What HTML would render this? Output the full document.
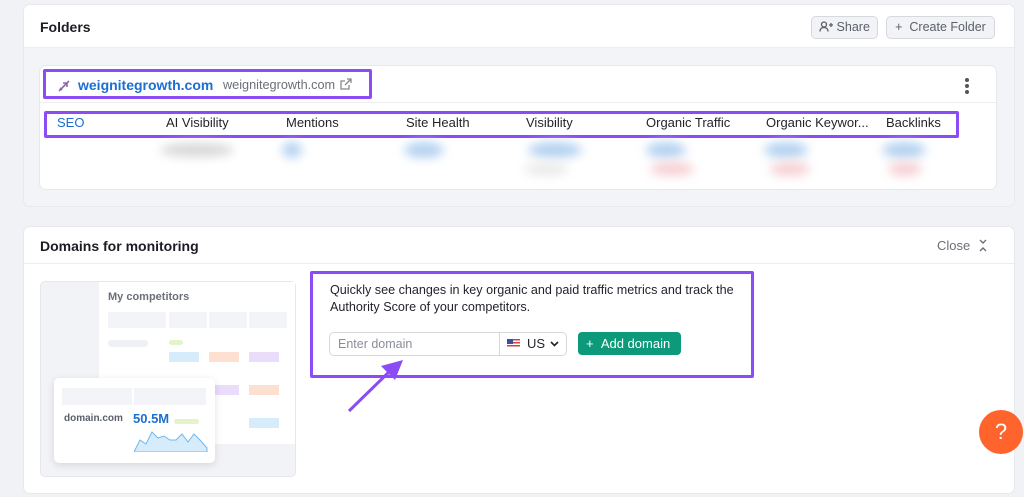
<!DOCTYPE html><html><head><style>
*{box-sizing:border-box;margin:0;padding:0}
body{width:1024px;height:497px;background:#f1f2f6;font-family:"Liberation Sans",sans-serif;position:relative;overflow:hidden;color:#212121}
.abs{position:absolute;white-space:nowrap}
.panel{position:absolute;left:24px;width:990px;background:#fff;border-radius:6px;box-shadow:0 0 0 1px #e8e9ee}
.btn{position:absolute;top:11px;height:23px;border:1px solid #d6d8de;border-radius:5px;background:#f2f3f6;font-size:12.5px;color:#5b5f6a;line-height:21px;white-space:nowrap;text-align:center}
.hdr{position:absolute;top:115px;font-size:13px;color:#1f2229;white-space:nowrap}
.blob{position:absolute;border-radius:50%;filter:blur(5px)}
.purple{border:3px solid #8b4cf6;position:absolute;border-radius:2px}
</style></head><body>
<div class="panel" style="top:5px;height:201px;background:#f3f4f8;overflow:hidden">
  <div class="abs" style="left:0;top:0;width:990px;height:43px;background:#fff;border-bottom:1px solid #eceef2"></div>
  <div class="abs" style="left:16px;top:14px;font-size:14px;font-weight:bold;color:#1b1d23">Folders</div>
  <div class="btn" style="left:787px;width:67px"><svg width="14" height="11" viewBox="0 0 14 11" style="vertical-align:-1px"><circle cx="5" cy="3.5" r="2.5" fill="none" stroke="#5b5f6a" stroke-width="1.3"/><path d="M1 10.5c0-3 2-4 4-4s4 1 4 4M10 4h4M12 2v4" stroke="#5b5f6a" stroke-width="1.3" fill="none"/></svg> Share</div>
  <div class="btn" style="left:862px;width:109px">+&nbsp;&nbsp;Create Folder</div>
  <div class="abs" style="left:16px;top:61px;width:956px;height:123px;background:#fff;border-radius:6px;box-shadow:0 0 0 1px #e6e8ec">
    <div class="abs" style="left:0;top:36px;width:956px;height:1px;background:#eceef2"></div>
    <div class="abs" style="left:925px;top:12px;width:4px"><div style="width:4px;height:4px;border-radius:2px;background:#555;margin-bottom:2px"></div><div style="width:4px;height:4px;border-radius:2px;background:#555;margin-bottom:2px"></div><div style="width:4px;height:4px;border-radius:2px;background:#555"></div></div>
  </div>
</div>
<svg class="abs" style="left:57px;top:79px" width="14" height="14" viewBox="0 0 14 14"><path d="M2 12 L12 2 M6 4 L10 4 L10 8 M3 9 l2 2" stroke="#8b6aa8" stroke-width="1.6" fill="none"/></svg>
<div class="abs" style="left:78px;top:77px;font-size:14px;font-weight:bold;color:#1a6fd1">weignitegrowth.com</div>
<div class="abs" style="left:223px;top:78px;font-size:12.7px;color:#6b6f78">weignitegrowth.com</div>
<svg class="abs" style="left:340px;top:78px" width="12" height="12" viewBox="0 0 12 12"><path d="M9 7v4H1V3h4M7 1h4v4M11 1L5 7" stroke="#888" stroke-width="1.3" fill="none"/></svg>
<div class="purple" style="left:43px;top:69px;width:329px;height:30px"></div>
<div class="hdr" style="left:57px;color:#1a6fd1">SEO</div>
<div class="hdr" style="left:166px">AI Visibility</div>
<div class="hdr" style="left:286px">Mentions</div>
<div class="hdr" style="left:406px">Site Health</div>
<div class="hdr" style="left:526px">Visibility</div>
<div class="hdr" style="left:646px">Organic Traffic</div>
<div class="hdr" style="left:766px">Organic Keywor...</div>
<div class="hdr" style="left:886px">Backlinks</div>
<div class="purple" style="left:44px;top:111px;width:915px;height:27px"></div>
<div class="blob" style="left:160px;top:143px;width:74px;height:14px;background:#d8d8d8"></div>
<div class="blob" style="left:282px;top:142px;width:20px;height:16px;background:#b4d2f0"></div>
<div class="blob" style="left:404px;top:142px;width:40px;height:16px;background:#b4d2f0"></div>
<div class="blob" style="left:528px;top:142px;width:54px;height:16px;background:#b4d2f0"></div>
<div class="blob" style="left:524px;top:162px;width:44px;height:14px;background:#ebebeb"></div>
<div class="blob" style="left:646px;top:142px;width:40px;height:16px;background:#b4d2f0"></div>
<div class="blob" style="left:650px;top:162px;width:44px;height:14px;background:#f6d0d4"></div>
<div class="blob" style="left:764px;top:142px;width:44px;height:16px;background:#b4d2f0"></div>
<div class="blob" style="left:770px;top:162px;width:40px;height:14px;background:#f6d0d4"></div>
<div class="blob" style="left:882px;top:142px;width:44px;height:16px;background:#b4d2f0"></div>
<div class="blob" style="left:888px;top:162px;width:34px;height:14px;background:#f6d0d4"></div>

<div class="panel" style="top:227px;height:266px">
  <div class="abs" style="left:0;top:36px;width:990px;height:1px;background:#eceef2"></div>
  <div class="abs" style="left:16px;top:11px;font-size:14px;font-weight:bold;color:#1b1d23">Domains for monitoring</div>
  <div class="abs" style="left:913px;top:11px;font-size:13px;color:#6b6f78">Close</div>
  <svg class="abs" style="left:954px;top:12px" width="10" height="13" viewBox="0 0 10 13"><path d="M2 1l3 3 3-3M2 12l3-3 3 3" stroke="#6b6f78" stroke-width="1.4" fill="none"/></svg>
</div>
<div class="abs" style="left:40px;top:281px;width:256px;height:196px;background:#f2f3f7;border-radius:5px;border:1px solid #e6e7ec"></div>
<div class="abs" style="left:99px;top:282px;width:196px;height:162px;background:#fff"></div>
<div class="abs" style="left:108px;top:291px;font-size:11px;font-weight:bold;color:#6b6f78">My competitors</div>
<div class="abs" style="left:108px;top:312px;width:58px;height:16px;background:#f3f4f7"></div>
<div class="abs" style="left:169px;top:312px;width:38px;height:16px;background:#f3f4f7"></div>
<div class="abs" style="left:209px;top:312px;width:38px;height:16px;background:#f3f4f7"></div>
<div class="abs" style="left:249px;top:312px;width:38px;height:16px;background:#f3f4f7"></div>
<div class="abs" style="left:108px;top:340px;width:40px;height:7px;border-radius:4px;background:#eef0f3"></div>
<div class="abs" style="left:169px;top:340px;width:14px;height:5px;border-radius:3px;background:#e4f3c8"></div>
<div class="abs" style="left:169px;top:352px;width:30px;height:10px;background:#d6ecfa"></div>
<div class="abs" style="left:209px;top:352px;width:30px;height:10px;background:#fde0cf"></div>
<div class="abs" style="left:249px;top:352px;width:30px;height:10px;background:#eadcfb"></div>
<div class="abs" style="left:209px;top:385px;width:30px;height:10px;background:#eadcfb"></div>
<div class="abs" style="left:249px;top:385px;width:30px;height:10px;background:#fde0cf"></div>
<div class="abs" style="left:249px;top:418px;width:30px;height:10px;background:#d6ecfa"></div>
<div class="abs" style="left:54px;top:378px;width:161px;height:85px;background:#fff;border-radius:5px;box-shadow:0 2px 8px rgba(0,0,0,.12)"></div>
<div class="abs" style="left:62px;top:388px;width:70px;height:17px;background:#f3f4f7"></div>
<div class="abs" style="left:134px;top:388px;width:72px;height:17px;background:#f3f4f7"></div>
<div class="abs" style="left:64px;top:413px;font-size:10px;font-weight:bold;color:#5b5f6a">domain.com</div>
<div class="abs" style="left:133px;top:411px;font-size:13px;font-weight:bold;color:#1a6fd1">50.5M</div>
<div class="abs" style="left:174px;top:419px;width:25px;height:5px;border-radius:3px;background:#e4f3c8"></div>
<svg class="abs" style="left:134px;top:430px" width="74" height="22" viewBox="0 0 74 22"><path d="M0 22 L6 10 L12 14 L18 2 L24 8 L30 6 L36 10 L42 10 L48 4 L54 12 L60 4 L66 10 L73 18 L73 22Z" fill="#d6ecfa" stroke="#6fb8ee" stroke-width="1"/></svg>
<div class="abs" style="left:330px;top:282px;font-size:12.6px;line-height:17px;color:#1f2229;width:412px;white-space:normal">Quickly see changes in key organic and paid traffic metrics and track the Authority Score of your competitors.</div>
<div class="abs" style="left:329px;top:332px;width:238px;height:24px;border:1px solid #d6d8de;border-radius:5px;background:#fff"></div>
<div class="abs" style="left:499px;top:333px;width:1px;height:22px;background:#d6d8de"></div>
<div class="abs" style="left:338px;top:337px;font-size:12.5px;color:#8a8e96">Enter domain</div>
<div class="abs" style="left:507px;top:339px;width:13px;height:9px;background:repeating-linear-gradient(#d04040 0 1.5px,#fff 1.5px 3px)"><div style="width:6px;height:5px;background:#3b4f9b"></div></div>
<div class="abs" style="left:527px;top:336px;font-size:13px;color:#1f2229">US</div>
<svg class="abs" style="left:550px;top:341px" width="9" height="6" viewBox="0 0 9 6"><path d="M1 1l3.5 3.5L8 1" stroke="#222" stroke-width="1.6" fill="none"/></svg>
<div class="abs" style="left:578px;top:332px;width:103px;height:23px;background:#0d9a7a;border-radius:4px;color:#fff;font-size:13px;line-height:23px;padding-left:8px">+&nbsp;&nbsp;Add domain</div>
<div class="purple" style="left:310px;top:271px;width:444px;height:107px"></div>
<svg class="abs" style="left:345px;top:358px" width="62" height="56" viewBox="0 0 62 56"><path d="M4 53 L46 12" stroke="#8b4cf6" stroke-width="3"/><path d="M58 2 L36 8 L50 22Z" fill="#8b4cf6"/></svg>
<div class="abs" style="left:979px;top:410px;width:44px;height:44px;border-radius:50%;background:#ff642d;color:#fff;font-size:22px;text-align:center;line-height:44px">?</div>
</body></html>
